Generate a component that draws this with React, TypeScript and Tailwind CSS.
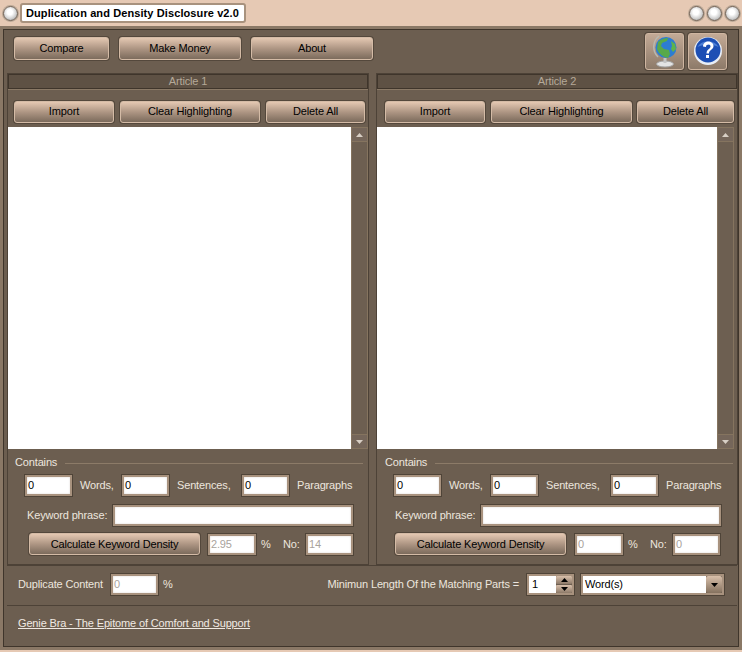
import React from "react";

const Btn = ({ w, label, h = "h-[23px]" }: { w: string; label: string; h?: string }) => (
  <button className={`${w} ${h} shrink-0 rounded-[3px] border border-[#d4bba6] bg-gradient-to-b from-[#e4c8b2] via-[#ae9684] to-[#7c6b5c] text-[11px] text-black shadow-[0_0_0_1px_#54483c] flex items-center justify-center`}>
    {label}
  </button>
);

const Field = ({ w, value = "", disabled = false, h = "h-[21px]" }: { w: string; value?: string; disabled?: boolean; h?: string }) => (
  <div className={`${w} ${h} shrink-0 border-2 border-[#a8927e] bg-white shadow-[0_0_0_1px_#4f4438,inset_0_0_2px_#d8d2cc] pl-[1px] flex items-center text-[11px] ${disabled ? "text-[#a9a39c]" : "text-black"}`}>
    {value}
  </div>
);

const Arrow = ({ up }: { up?: boolean }) => (
  <svg width="7" height="4" viewBox="0 0 7 4">
    <path d={up ? "M3.500 0 7 4H0z" : "M0 0h7L3.500 4z"} fill="currentColor" />
  </svg>
);

const Panel = ({ title, rate, no, clearW, delW, taW, btnPl, right }: { title: string; rate: string; no: string; clearW: string; delW: string; taW: string; btnPl: string; right?: boolean }) => (
  <section className="w-[362px] h-[492px] shrink-0 border border-[#4d4237] flex flex-col overflow-hidden">
    <div className="h-[15px] shrink-0 border border-[#3f352b] bg-[#5e5144] flex items-center justify-center text-[11px] text-[#b5a999]">{title}</div>
    <div className={`h-[38px] shrink-0 border-t border-[#8a7966] flex items-center gap-[6px] pt-[6px] ${btnPl}`}>
      <Btn w="w-[100px]" label="Import" h="h-[22px]" />
      <Btn w={clearW} label="Clear Highlighting" h="h-[22px]" />
      <div className={right ? "-ml-px" : ""}><Btn w={delW} label="Delete All" h="h-[22px]" /></div>
    </div>
    <div className="h-[322px] shrink-0 flex">
      <div className={`${taW} bg-white`} />
      <div className="w-[17px] shrink-0 border border-[#85745f] bg-[#6d5f51] flex flex-col justify-between text-[#d8cfc5]">
        <div className="h-[14px] border-b border-[#85745f] bg-[#75665a] flex items-center justify-center"><Arrow up /></div>
        <div className="h-[14px] border-t border-[#85745f] bg-[#75665a] flex items-center justify-center"><Arrow /></div>
      </div>
    </div>
    <div className={`flex-1 ${right ? "pl-[8px]" : "pl-[7px]"} text-[11px] text-[#ece6df]`}>
      <div className="mt-[7px] h-[13px] flex items-center gap-[8px]">
        <span>Contains</span>
        <div className="w-[298px] h-px bg-[#8c7b68] mt-[1px]" />
      </div>
      <div className={`mt-[6px] ${right ? "ml-[9px]" : "ml-[10px]"} flex items-center`}>
        <Field w="w-[47px]" value="0" />
        <span className="ml-[8px] w-[42px]">Words,</span>
        <Field w="w-[47px]" value="0" />
        <span className="ml-[8px] w-[65px]">Sentences,</span>
        <Field w="w-[47px]" value="0" />
        <span className="ml-[8px]">Paragraphs</span>
      </div>
      <div className={`mt-[9px] ${right ? "ml-[10px]" : "ml-[12px]"} flex items-center`}>
        <span className="w-[86px]">Keyword phrase:</span>
        <Field w="w-[240px]" />
      </div>
      <div className={`mt-[7px] ${right ? "ml-[10px]" : "ml-[14px]"} flex items-center`}>
        <Btn w="w-[171px]" label="Calculate Keyword Density" h="h-[22px]" />
        <div className={right ? "ml-[9px]" : "ml-[8px]"}><Field w="w-[48px]" value={rate} disabled /></div>
        <span className="ml-[5px] w-[22px]">%</span>
        <span className="w-[23px]">No:</span>
        <Field w="w-[47px]" value={no} disabled />
      </div>
    </div>
  </section>
);

const Dot = () => (
  <div className="w-[15px] h-[15px] rounded-full border border-[#6f6257] bg-[radial-gradient(circle_at_45%_40%,#ffffff_25%,#d0d0d0_60%,#8c8c8c_100%)] shadow-[0_0_0_1px_#b9a795]" />
);

const Globe = () => (
  <svg width="28" height="34" viewBox="0 0 28 34">
    <path d="M8 2a14 14 0 0 0-1 21" fill="none" stroke="#b8b8b0" strokeWidth="1.500" />
    <ellipse cx="14" cy="30" rx="8.500" ry="3" fill="#e4e4e4" stroke="#a3a3a3" />
    <rect x="12.500" y="24" width="3" height="5" fill="#c4c4c4" />
    <circle cx="15" cy="13.500" r="10.500" fill="#2d7dd2" />
    <path d="M7 8c3-3 7-4 10-4l-1 3-5 2-1 3 3 3 5 1 1 4-2 4c-5-1-9-4-11-9z" fill="#58a94a" />
    <path d="M20 7l4 3 1 5-3 3-2-3 1-3z" fill="#5fb34b" />
  </svg>
);

const Help = () => (
  <svg width="30" height="30" viewBox="0 0 30 30">
    <circle cx="15" cy="15" r="14" fill="#e8eef6" />
    <circle cx="15" cy="14" r="12.500" fill="#1d4fb4" />
    <path d="M4.500 11a11 8 0 0 1 21 0c-5-3-15-3-21 0z" fill="#4d7fd6" />
    <path d="M10 10.500c0-7 10.500-6.500 10.500-.5 0 4-4.500 3.500-4.500 7.500h-2.500c0-4.500 4-4.500 4-7 0-2.600-4.500-2.600-4.500.5z" fill="#fff" />
    <rect x="13" y="19" width="3" height="3" fill="#fff" />
  </svg>
);

const IconBtn = ({ children }: { children: React.ReactNode }) => (
  <div className="w-[39px] h-[37px] rounded-[3px] border border-[#cfb6a1] bg-gradient-to-b from-[#c3aa96] to-[#8d7a69] shadow-[0_0_0_1px_#54483c] flex items-center justify-center">
    {children}
  </div>
);

export default function App() {
  return (
    <div className="w-[742px] h-[652px] overflow-hidden bg-[#e6c9b4] flex flex-col font-['Liberation_Sans',Arial,sans-serif] tracking-[-0.15px]">
      <header className="h-[26px] shrink-0 flex items-center pl-[3px] pr-[2px]">
        <Dot />
        <div className="ml-[2px] h-[20px] w-[226px] rounded-[3px] border-2 border-[#a8927e] bg-white text-[11px] font-bold text-black flex items-center pl-[4px] tracking-[0.1px] whitespace-nowrap">
          Duplication and Density Disclosure v2.0
        </div>
        <div className="ml-auto flex gap-[3px]"><Dot /><Dot /><Dot /></div>
      </header>
      <main className="h-[624px] shrink-0 border-[3px] border-[#8a7866] bg-[#6c5e50] shadow-[inset_0_0_0_1px_#3f352b] flex flex-col pl-[4px] pr-[2px]">
        <div className="h-[44px] shrink-0 flex items-center pl-[7px]">
          <div className="flex gap-[10px] mb-[6px]">
            <Btn w="w-[95px]" label="Compare" />
            <Btn w="w-[122px]" label="Make Money" />
            <Btn w="w-[122px]" label="About" />
          </div>
          <div className="ml-auto mr-[10px] flex gap-[4px]">
            <IconBtn><Globe /></IconBtn>
            <IconBtn><Help /></IconBtn>
          </div>
        </div>
        <div className="flex gap-[7px]">
          <Panel title="Article 1" rate="2.95" no="14" clearW="w-[140px]" delW="w-[99px]" taW="w-[343px]" btnPl="pl-[6px]" />
          <Panel title="Article 2" rate="0" no="0" clearW="w-[141px]" delW="w-[97px]" taW="w-[340px]" btnPl="pl-[8px]" right />
        </div>
        <div className="h-[41px] shrink-0 border-y border-[#4d4237] flex items-center pl-[11px] pr-[13px] pb-[2px] text-[11px] text-[#ece6df]">
          <span>Duplicate Content</span>
          <div className="ml-[8px]"><Field w="w-[47px]" value="0" disabled /></div>
          <span className="ml-[5px]">%</span>
          <span className="ml-auto">Minimun Length Of the Matching Parts =</span>
          <div className="ml-[8px] w-[47px] h-[21px] border-2 border-[#a8927e] shadow-[0_0_0_1px_#4f4438] flex text-black">
            <div className="flex-1 bg-white pl-[3px] flex items-center">1</div>
            <div className="w-[16px] flex flex-col gap-px">
              <div className="flex-1 rounded-[1px] bg-gradient-to-b from-[#d9c0ab] to-[#8d7a69] flex items-center justify-center"><Arrow up /></div>
              <div className="flex-1 rounded-[1px] bg-gradient-to-b from-[#d9c0ab] to-[#8d7a69] flex items-center justify-center"><Arrow /></div>
            </div>
          </div>
          <div className="ml-[7px] w-[143px] h-[21px] border-2 border-[#a8927e] shadow-[0_0_0_1px_#4f4438] flex text-black">
            <div className="flex-1 bg-white pl-[2px] flex items-center">Word(s)</div>
            <div className="w-[16px] rounded-[2px] bg-gradient-to-b from-[#d9c0ab] to-[#85725f] flex items-center justify-center"><Arrow /></div>
          </div>
        </div>
        <div className="flex-1 pl-[11px] pt-[9px] text-[11px] text-[#f0e9e2]">
          <a className="underline">Genie Bra - The Epitome of Comfort and Support</a>
        </div>
      </main>
    </div>
  );
}
